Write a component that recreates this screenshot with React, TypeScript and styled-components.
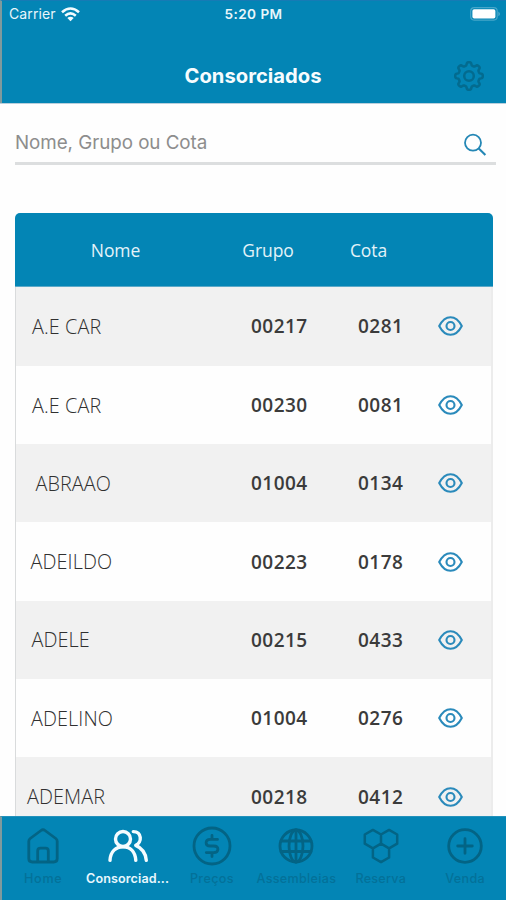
import React from "react";
import styled, { createGlobalStyle } from "styled-components";

const BLUE = "#0385b5";

const GlobalStyle = createGlobalStyle`
  *, *::before, *::after { box-sizing: border-box; }
  body { margin: 0; background: #fefefe; overflow: hidden; }
`;

const Screen = styled.div`
  width: 506px;
  height: 900px;
  overflow: hidden;
  display: flex;
  flex-direction: column;
  background: #fefefe;
  font-family: Inter, Roboto, sans-serif;
`;

const Header = styled.header`
  flex: none;
  height: 103px;
  background: ${BLUE};
  border-left: 2px solid #7f9a9d;
  border-top: 1px solid #167bb5;
  box-shadow: 0 1px 0 #b9cfdc;
`;

const StatusBar = styled.div`
  display: grid;
  grid-template-columns: 1fr auto 1fr;
  align-items: center;
  height: 26px;
  padding: 0 5px 0 7px;
  color: #e9f6fb;
  font: 400 14px/26px Inter, sans-serif;
`;

const Carrier = styled.div`
  display: flex;
  align-items: center;
  gap: 5px;
  letter-spacing: 0.1px;
`;

const Clock = styled.div`
  font-size: 13.6px;
  font-weight: 600;
  letter-spacing: 0.45px;
  margin-right: 3px;
`;

const BatteryIcon = styled.svg`
  justify-self: end;
  display: block;
  margin-top: -1px;
`;

const TitleBar = styled.div`
  display: grid;
  grid-template-columns: 60px 1fr 60px;
  align-items: center;
  height: 76px;
  padding: 22px 5px 0 3px;
`;

const Title = styled.h1`
  grid-column: 2;
  margin: 0;
  text-align: center;
  color: #f7fcfe;
  font: 700 20.2px/24px Inter, sans-serif;
  letter-spacing: 0.02px;
`;

const GearButton = styled.button`
  display: flex;
  justify-content: center;
  padding: 0;
  margin: 0 4px 0 0;
  border: 0;
  background: none;
`;

const SearchField = styled.div`
  flex: none;
  display: flex;
  align-items: center;
  justify-content: space-between;
  height: 44px;
  margin: 18px 10px 0 15px;
  padding: 6px 9px 0 0;
  border-bottom: 3px solid #dcdedf;
`;

const Placeholder = styled.span`
  color: #8d8d8d;
  font: 400 18.8px/24px Inter, sans-serif;
  letter-spacing: -0.05px;
  margin-top: -3px;
`;

const Table = styled.section`
  flex: 1;
  min-height: 0;
  overflow: hidden;
  margin: 48px 13px 0 15px;
  border-radius: 5px 5px 0 0;
  font-family: "Open Sans", sans-serif;
`;

const TableHead = styled.div`
  display: grid;
  grid-template-columns: 201px 104px 97px 1fr;
  align-items: center;
  height: 74px;
  background: ${BLUE};
  border-bottom: 1px solid #5ba9c8;
  color: #e4f3f9;
  font-size: 17.5px;
  font-weight: 500;
  letter-spacing: -0.1px;
  text-align: center;
`;

const TableBody = styled.div`
  border-left: 1px solid #d9dbdc;
  border-right: 2px solid #ececec;
`;

const Row = styled.div`
  display: grid;
  grid-template-columns: 235px 107px 80px 1fr;
  align-items: center;
  height: 78.3px;
  background: #fefefe;
  &:nth-child(odd) { background: #f1f1f1; }
  &:first-child { height: 78.9px; }
`;

const Name = styled.span<{ $indent: number }>`
  padding-left: ${(p) => p.$indent}px;
  color: #303030;
  font-size: 19.8px;
  font-weight: 300;
  letter-spacing: 0.1px;
  white-space: nowrap;
`;

const Figure = styled.span`
  color: #3b3b3b;
  font-size: 19px;
  font-weight: 650;
  letter-spacing: 0.45px;
`;

const TabBar = styled.nav`
  flex: none;
  display: grid;
  grid-template-columns: repeat(6, 84.4px);
  height: 84px;
  background: ${BLUE};
  border-left: 2px solid #7f9a9d;
  border-top: 1px solid #2391bb;
`;

const Tab = styled.div<{ $active?: boolean }>`
  display: flex;
  flex-direction: column;
  align-items: center;
  margin-left: -1px;
  margin-right: 1px;
  padding-top: 9px;
  color: ${(p) => (p.$active ? "#f5fcff" : "#036485")};
`;

const TabLabel = styled.span<{ $active?: boolean; $spacing: number }>`
  margin-top: 4px;
  color: ${(p) => (p.$active ? "#e8f7fd" : "#037199")};
  font: ${(p) => (p.$active ? 600 : 500)} 12.6px/17px Inter, sans-serif;
  letter-spacing: ${(p) => p.$spacing}px;
  white-space: nowrap;
`;

const gearPath = (() => {
  const pts: string[] = [];
  for (let i = 0; i < 160; i++) {
    const a = (i / 160) * Math.PI * 2;
    const r = 12.2 + 1.6 * Math.tanh(2.2 * Math.cos(8 * a));
    pts.push(`${(Math.sin(a) * r).toFixed(2)} ${(-Math.cos(a) * r).toFixed(2)}`);
  }
  return `M${pts.join("L")}Z`;
})();

const Wifi = () => (
  <svg width="19" height="15" viewBox="0 0 19 15" fill="none" stroke="#f2fbff" strokeWidth="2.6">
    <path d="M1 5.2Q9.5-2.2 18 5.2" />
    <path d="M4.2 8.7Q9.5 4.2 14.8 8.7" />
    <path d="M9.5 14.2L6.3 11Q9.5 8.3 12.7 11Z" fill="#f2fbff" stroke="none" />
  </svg>
);

const Battery = () => (
  <BatteryIcon width="31" height="14" viewBox="0 0 31 14">
    <rect x="0.7" y="0.7" width="26.5" height="12.4" rx="3.5" fill="none" stroke="#46a6c9" strokeWidth="1.2" />
    <rect x="2.4" y="2.2" width="23" height="9.4" rx="1.8" fill="#fff" />
    <path d="M28.5 4.5Q31 7 28.5 9.3Z" fill="#68b7d4" />
  </BatteryIcon>
);

const Gear = () => (
  <svg width="32" height="32" viewBox="-16 -16 32 32" fill="none" stroke="#036b8f" strokeWidth="2.5">
    <path d={gearPath} strokeLinejoin="round" />
    <circle r="4.8" />
  </svg>
);

const Magnifier = () => (
  <svg width="24" height="24" viewBox="0 0 24 24" fill="none" stroke="#2487b5" strokeWidth="1.8">
    <circle cx="10" cy="9.7" r="8" />
    <path d="M15.5 15.3L22.4 22" strokeWidth="2.1" />
  </svg>
);

const Eye = () => (
  <svg width="26" height="22" viewBox="-12.5 -11 26 22" fill="none" stroke="#2a8abb" strokeWidth="2.1">
    <path d="M-11.3 0C-8.3-5.8-4.6-8.8 0-8.8S8.3-5.8 11.3 0C8.3 5.8 4.6 8.8 0 8.8S-8.3 5.8-11.3 0Z" strokeLinejoin="round" />
    <circle r="4" />
  </svg>
);

const TabIcon = ({ children }: { children: React.ReactNode }) => (
  <svg width="44" height="40" viewBox="-22 -20 44 40" fill="none" stroke="currentColor" strokeWidth="2.8" strokeLinecap="round" strokeLinejoin="round">
    {children}
  </svg>
);

const hexagon = (cx: number, cy: number) =>
  `M${cx} ${cy - 9.2}l8.1 4.6v9.2l-8.1 4.6l-8.1-4.6v-9.2Z`;

const tabs = [
  {
    label: "Home",
    spacing: 0.7,
    icon: (
      <>
        <path d="M-14.2-4.7Q-14.2-6.4-12.8-7.5L-2-15.5Q0-17 2-15.5L12.8-7.5Q14.2-6.4 14.2-4.7V12.5Q14.2 16 10.7 16H-10.7Q-14.2 16-14.2 12.5Z" />
        <path d="M-5.3 15.5V5Q-5.3 2.2-2.5 2.2H2.5Q5.3 2.2 5.3 5V15.5" />
      </>
    ),
  },
  {
    label: "Consorciad...",
    spacing: 0.1,
    active: true,
    icon: (
      <>
        <circle cx="-5" cy="-7" r="7.5" strokeWidth="3.4" />
        <path d="M-18 14.3C-17.5 5.3-12 .7-5 .7S7.2 5.3 7.8 14.3M5.3-14.4C14-14.5 14.3-3.4 7.7-.6C14.3 2.2 17.6 7 18.3 14.3" strokeWidth="3.4" />
      </>
    ),
  },
  {
    label: "Preços",
    spacing: 0.4,
    icon: (
      <>
        <circle r="18" />
        <path d="M5.5-6.6H-1.7C-7.3-6.6-7.3 0-1.7 0H1.7C7.3 0 7.3 6.6 1.7 6.6H-5.7M0-10.5V-6.6M0 6.6V10.5" />
      </>
    ),
  },
  {
    label: "Assembleias",
    spacing: 0.3,
    icon: (
      <>
        <circle r="16" />
        <ellipse rx="7" ry="16" />
        <path d="M0-16V16M-15-5H15M-15 5.5H15" />
      </>
    ),
  },
  {
    label: "Reserva",
    spacing: 0.25,
    icon: (
      <path d={`${hexagon(-8.1, -6.9)}${hexagon(8.1, -6.9)}${hexagon(0, 6.9)}`} strokeWidth="2.5" />
    ),
  },
  {
    label: "Venda",
    spacing: 0.3,
    icon: (
      <>
        <circle r="16.3" />
        <path d="M-7.3 0H7.3M0-7.3V7.3" />
      </>
    ),
  },
];

const rows = [
  { name: "A.E CAR", group: "00217", quota: "0281", indent: 16 },
  { name: "A.E CAR", group: "00230", quota: "0081", indent: 16 },
  { name: "ABRAAO", group: "01004", quota: "0134", indent: 19.5 },
  { name: "ADEILDO", group: "00223", quota: "0178", indent: 14.5 },
  { name: "ADELE", group: "00215", quota: "0433", indent: 15.5 },
  { name: "ADELINO", group: "01004", quota: "0276", indent: 15 },
  { name: "ADEMAR", group: "00218", quota: "0412", indent: 11 },
];

export default function App() {
  return (
    <Screen>
      <GlobalStyle />
      <Header>
        <StatusBar>
          <Carrier>Carrier <Wifi /></Carrier>
          <Clock>5:20 PM</Clock>
          <Battery />
        </StatusBar>
        <TitleBar>
          <Title>Consorciados</Title>
          <GearButton aria-label="Configurações"><Gear /></GearButton>
        </TitleBar>
      </Header>
      <SearchField>
        <Placeholder>Nome, Grupo ou Cota</Placeholder>
        <Magnifier />
      </SearchField>
      <Table>
        <TableHead>
          <span>Nome</span>
          <span>Grupo</span>
          <span>Cota</span>
        </TableHead>
        <TableBody>
          {rows.map((row, i) => (
            <Row key={i}>
              <Name $indent={row.indent}>{row.name}</Name>
              <Figure>{row.group}</Figure>
              <Figure>{row.quota}</Figure>
              <Eye />
            </Row>
          ))}
        </TableBody>
      </Table>
      <TabBar>
        {tabs.map((tab) => (
          <Tab key={tab.label} $active={tab.active}>
            <TabIcon>{tab.icon}</TabIcon>
            <TabLabel $active={tab.active} $spacing={tab.spacing}>{tab.label}</TabLabel>
          </Tab>
        ))}
      </TabBar>
    </Screen>
  );
}
